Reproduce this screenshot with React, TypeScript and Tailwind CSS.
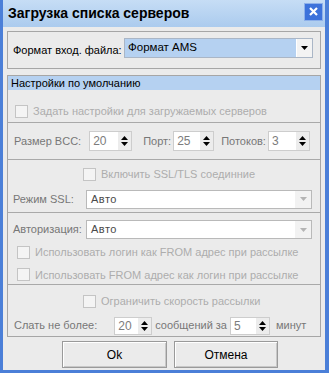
import React from "react";

function Tri({ up, color = "#000" }: { up?: boolean; color?: string }) {
  return (
    <svg width="7" height="4" viewBox="0 0 7 4" className="block">
      <path d={up ? "M0 4 L3.5 0 L7 4 Z" : "M0 0 L7 0 L3.5 4 Z"} fill={color} />
    </svg>
  );
}

function Spin({ value, w, h = "h-[20px]" }: { value: string; w: string; h?: string }) {
  return (
    <div className={`flex shrink-0 ${w} ${h} border border-[#cdcdcd] bg-white`}>
      <span className="flex flex-1 items-center pl-[3px] text-[12px] text-[#7c7c7c]">{value}</span>
      <span className="flex w-[13px] flex-col items-center justify-center gap-[2px] bg-[#ececec]">
        <Tri up />
        <Tri />
      </span>
    </div>
  );
}

function Check({ label }: { label: string }) {
  return (
    <div className="flex items-center">
      <span className="h-[13px] w-[13px] shrink-0 border border-[#c4c4c4] bg-[#f4f4f4]" />
      <span className="ml-[5px] text-[#adadad]">{label}</span>
    </div>
  );
}

function Select({ value }: { value: string }) {
  return (
    <div className="flex h-[19px] w-[226px] shrink-0 border border-[#b9b9b9] bg-white">
      <span className="flex flex-1 items-center pl-[4px] tracking-[0.5px] text-[#4a4a4a]">{value}</span>
      <span className="flex w-[16px] items-center justify-center bg-[#f2f2f2]">
        <Tri color="#b4b4b4" />
      </span>
    </div>
  );
}

const Divider = () => <div className="h-px bg-[#a9a9a9]" />;

export default function App() {
  return (
    <div className="flex h-[373px] w-[329px] flex-col overflow-hidden whitespace-nowrap bg-[#4b7fd8] pb-[3px] pl-[3px] pr-[4px] font-['Liberation_Sans',Arial,sans-serif] text-[11px] text-black">
      <div className="flex h-[27px] shrink-0 items-center justify-between bg-gradient-to-b from-[#c6ddf5] to-[#abcbee] pl-[5px] pr-[2px]">
        <span className="text-[14px] font-bold text-black">Загрузка списка серверов</span>
        <span className="mb-[4px] flex h-[18px] w-[19px] items-center justify-center border border-[#8db0ea] bg-[#3c72db]">
          <svg width="9" height="9" viewBox="0 0 9 9">
            <path d="M1 1 L8 8 M8 1 L1 8" stroke="#fff" strokeWidth="2.2" />
          </svg>
        </span>
      </div>

      <div className="flex flex-1 flex-col bg-[#ebebeb] px-[4px] pt-[4px]">
        <div className="flex h-[38px] shrink-0 items-start border border-[#a6a6a6] pl-[5px] pr-[7px] pt-[6px]">
          <span className="mt-[4px]">Формат вход. файла:</span>
          <div className="ml-auto flex h-[20px] w-[189px] border border-[#aab6c6] bg-[#b5d1f1]">
            <span className="flex flex-1 items-center pl-[3px] text-[11.5px]">Формат AMS</span>
            <span className="flex w-[16px] items-center justify-center border-l border-white bg-[#f3f3f3]">
              <Tri />
            </span>
          </div>
        </div>

        <div className="mt-[6px] flex shrink-0 flex-col border border-[#a6a6a6]">
          <div className="h-[14px] bg-[#b5d1f1] pl-[3px] leading-[14px]">Настройки по умолчанию</div>

          <div className="flex h-[32px] items-start pl-[7px] pt-[13px]">
            <Check label="Задать настройки для загружаемых серверов" />
          </div>
          <Divider />

          <div className="flex h-[36px] items-center pl-[6px] text-[#777]">
            <span>Размер BCC:</span>
            <div className="ml-[8px]">
              <Spin value="20" w="w-[43px]" />
            </div>
            <span className="ml-[11px]">Порт:</span>
            <div className="ml-[2px]">
              <Spin value="25" w="w-[41px]" />
            </div>
            <span className="ml-[7px]">Потоков:</span>
            <div className="ml-[2px]">
              <Spin value="3" w="w-[42px]" />
            </div>
          </div>
          <Divider />

          <div className="flex h-[52px] flex-col">
            <div className="mt-[6px] pl-[75px]">
              <Check label="Включить SSL/TLS соединние" />
            </div>
            <div className="mt-[7px] flex items-center pl-[5px] pr-[8px]">
              <span className="text-[#777]">Режим SSL:</span>
              <div className="ml-auto">
                <Select value="Авто" />
              </div>
            </div>
          </div>
          <Divider />

          <div className="flex h-[71px] flex-col">
            <div className="mt-[7px] flex items-center pl-[5px] pr-[8px]">
              <span className="text-[#777]">Авторизация:</span>
              <div className="ml-auto">
                <Select value="Авто" />
              </div>
            </div>
            <div className="mt-[5px] pl-[9px]">
              <Check label="Использовать логин как FROM адрес при рассылке" />
            </div>
            <div className="mt-[6px] pl-[9px]">
              <Check label="Использовать FROM адрес как логин при рассылке" />
            </div>
          </div>
          <Divider />

          <div className="flex h-[51px] flex-col">
            <div className="mt-[8px] pl-[75px]">
              <Check label="Ограничить скорость рассылки" />
            </div>
            <div className="mt-[7px] flex items-center pl-[6px] text-[#777]">
              <span>Слать не более:</span>
              <div className="ml-[17px]">
                <Spin value="20" w="w-[38px]" h="h-[18px]" />
              </div>
              <span className="ml-[3px]">сообщений за</span>
              <div className="ml-[3px]">
                <Spin value="5" w="w-[40px]" h="h-[18px]" />
              </div>
              <span className="ml-[6px]">минут</span>
            </div>
          </div>
        </div>

        <div className="mt-[4px] flex gap-[7px] pl-[55px]">
          <button className="h-[27px] w-[105px] border border-[#9a9a9a] bg-[#ebebeb] text-[12px] shadow-[inset_1px_1px_0_#fff,inset_-1px_-1px_0_#c8c8c8]">
            Ok
          </button>
          <button className="h-[27px] w-[104px] border border-[#9a9a9a] bg-[#ebebeb] text-[12px] shadow-[inset_1px_1px_0_#fff,inset_-1px_-1px_0_#c8c8c8]">
            Отмена
          </button>
        </div>
      </div>
    </div>
  );
}
